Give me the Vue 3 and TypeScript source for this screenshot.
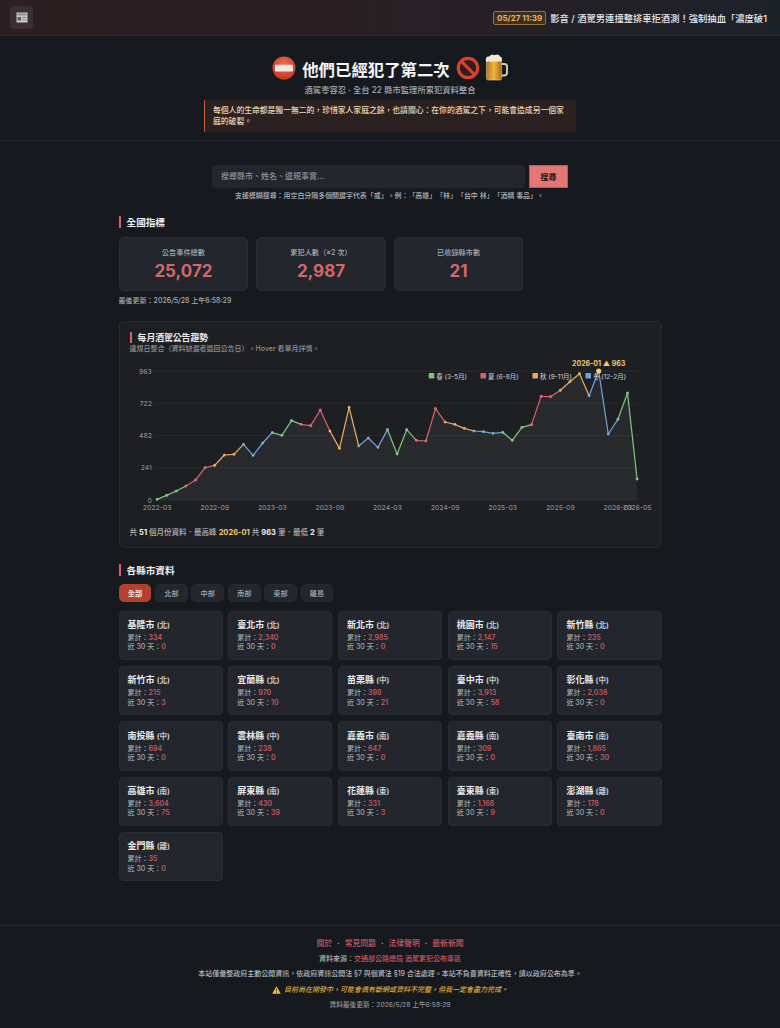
<script setup lang="ts">
interface County { name: string; region: string; total: string; recent: number }

const counties: County[] = [
  { name: '基隆市', region: '北', total: '334', recent: 0 },
  { name: '臺北市', region: '北', total: '2,340', recent: 0 },
  { name: '新北市', region: '北', total: '2,985', recent: 0 },
  { name: '桃園市', region: '北', total: '2,147', recent: 15 },
  { name: '新竹縣', region: '北', total: '235', recent: 0 },
  { name: '新竹市', region: '北', total: '215', recent: 3 },
  { name: '宜蘭縣', region: '北', total: '970', recent: 10 },
  { name: '苗栗縣', region: '中', total: '398', recent: 21 },
  { name: '臺中市', region: '中', total: '3,913', recent: 58 },
  { name: '彰化縣', region: '中', total: '2,036', recent: 0 },
  { name: '南投縣', region: '中', total: '694', recent: 0 },
  { name: '雲林縣', region: '中', total: '238', recent: 0 },
  { name: '嘉義市', region: '南', total: '647', recent: 0 },
  { name: '嘉義縣', region: '南', total: '309', recent: 0 },
  { name: '臺南市', region: '南', total: '1,865', recent: 30 },
  { name: '高雄市', region: '南', total: '3,604', recent: 75 },
  { name: '屏東縣', region: '南', total: '430', recent: 39 },
  { name: '花蓮縣', region: '東', total: '331', recent: 3 },
  { name: '臺東縣', region: '東', total: '1,168', recent: 9 },
  { name: '澎湖縣', region: '離', total: '178', recent: 0 },
  { name: '金門縣', region: '離', total: '35', recent: 0 },
]

const stats = [
  { label: '公告事件總數', value: '25,072' },
  { label: '累犯人數（≥2 次）', value: '2,987' },
  { label: '已收錄縣市數', value: '21' },
]

const filters = ['全部', '北部', '中部', '南部', '東部', '離島']

const zoomY = [538, 526, 513, 498, 480, 443, 436, 405, 403, 373, 406, 369, 338, 346, 302, 313, 317, 270, 333, 385, 262, 378, 354, 382, 329, 402, 329, 361, 363, 266, 306, 313, 325, 333, 335, 340, 337, 361, 322, 314, 229, 230, 211, 185, 161, 227, 153, 342, 298, 219, 477]

const left = 27.1
const step = 9.6
const top = 16
const base = 145
const px = (i: number) => left + step * i
const py = (i: number) => top + (zoomY[i] - 153) / 3

const seasonColors = { spring: '#7fc47a', summer: '#d9606a', autumn: '#e8ac5a', winter: '#6fa3d8' }
const season = (i: number): string => {
  const month = (i + 2) % 12
  if (month >= 2 && month <= 4) return seasonColors.spring
  if (month >= 5 && month <= 7) return seasonColors.summer
  if (month >= 8 && month <= 10) return seasonColors.autumn
  return seasonColors.winter
}

const points = zoomY.map((_, i) => ({ x: px(i), y: py(i), color: season(i) }))
const segments = points.slice(0, -1).map((p, i) => ({ x1: p.x, y1: p.y, x2: points[i + 1].x, y2: points[i + 1].y, color: p.color }))
const areaPath = `M${px(0)} ${base} ` + points.map((p) => `L${p.x} ${p.y}`).join(' ') + ` L${px(50)} ${base} Z`

const yTicks = [
  { label: '963', y: 16 },
  { label: '722', y: 48.3 },
  { label: '482', y: 80.5 },
  { label: '241', y: 112.7 },
  { label: '0', y: 145 },
]
const xTicks = [
  { label: '2022-03', i: 0 }, { label: '2022-09', i: 6 }, { label: '2023-03', i: 12 },
  { label: '2023-09', i: 18 }, { label: '2024-03', i: 24 }, { label: '2024-09', i: 30 },
  { label: '2025-03', i: 36 }, { label: '2025-09', i: 42 }, { label: '2026-03', i: 48 },
  { label: '2026-05', i: 50 },
]
const legend = [
  { label: '春 (3-5月)', x: 298.7, color: seasonColors.spring },
  { label: '夏 (6-8月)', x: 350.4, color: seasonColors.summer },
  { label: '秋 (9-11月)', x: 402.4, color: seasonColors.autumn },
  { label: '冬 (12-2月)', x: 455.4, color: seasonColors.winter },
]
</script>

<template>
  <div class="page">
    <header class="topbar">
      <div class="logo">
        <svg width="12" height="11" viewBox="0 0 12 11">
          <rect x="0.5" y="0.5" width="11" height="10" fill="#c9cbcc" />
          <rect x="1.5" y="1.5" width="9" height="2" fill="#8b8e90" />
          <rect x="1.5" y="5" width="3.5" height="3.5" fill="#55585b" />
          <rect x="6" y="5" width="4.5" height="1" fill="#85888a" />
          <rect x="6" y="7.3" width="4.5" height="1" fill="#85888a" />
        </svg>
      </div>
      <div class="ticker">
        <span class="ticker-time">05/27 11:39</span>
        <span class="ticker-text">影音 / 酒駕男連撞整排車拒酒測！強制抽血「濃度破1</span>
      </div>
    </header>

    <section class="hero">
      <h1 class="hero-title">
        <svg class="emoji" width="24" height="24" viewBox="0 0 24 24">
          <defs>
            <radialGradient id="redBall" cx="50%" cy="35%" r="70%">
              <stop offset="0%" stop-color="#f0705a" />
              <stop offset="100%" stop-color="#c2311f" />
            </radialGradient>
          </defs>
          <circle cx="12" cy="12" r="11.5" fill="url(#redBall)" />
          <rect x="3" y="8.8" width="18" height="6.6" rx="1" fill="#f3e6e2" />
        </svg>
        <span class="hero-text">他們已經犯了第二次</span>
        <svg class="emoji" width="24" height="24" viewBox="0 0 24 24">
          <circle cx="12" cy="12" r="9.7" fill="#2a2024" stroke="#d8402f" stroke-width="3.2" />
          <line x1="5.2" y1="5.2" x2="18.8" y2="18.8" stroke="#d8402f" stroke-width="3.2" />
        </svg>
        <svg class="emoji beer" width="23" height="27" viewBox="0 0 23 27">
          <defs>
            <linearGradient id="beerFill" x1="0" y1="0" x2="1" y2="0">
              <stop offset="0%" stop-color="#b8761f" />
              <stop offset="50%" stop-color="#f0b63f" />
              <stop offset="100%" stop-color="#a8691a" />
            </linearGradient>
          </defs>
          <path d="M16 10h3.5a2.5 2.5 0 0 1 2.500 2.500v6a3 3 0 0 1-3 3H16" fill="none" stroke="#cfc7b2" stroke-width="2" />
          <rect x="1.5" y="6" width="15" height="20" rx="1.6" fill="url(#beerFill)" stroke="#c9b58c" stroke-width="0.7" />
          <path d="M1 7c-1-3 1-5 3.500-4.500C5 .8 8 .2 9.500 1.200c2-1.200 5-.6 5.600 1.500 2 0 2.400 2.600 1.400 4.300-.8 1.400-2 .8-2.500 0-.8 1-2.400 1-3 .2-1 1-2.600 1-3.400.1C7 8 4.400 8 3.800 7 3 8.400 1.500 8.200 1 7z" fill="#f1e9d6" />
        </svg>
      </h1>
      <p class="hero-sub">酒駕零容忍 · 全台 22 縣市監理所累犯資料整合</p>
      <blockquote class="hero-quote">每個人的生命都是獨一無二的，珍惜家人家庭之餘，也請關心：在你的酒駕之下，可能會造成另一個家庭的破裂。</blockquote>
    </section>

    <main class="main">
      <div class="search-row">
        <div class="search-input">搜尋縣市、姓名、違規事實...</div>
        <button class="search-btn" type="button">搜尋</button>
      </div>
      <p class="search-help">支援模糊搜尋：用空白分隔多個關鍵字代表「或」。例：「高雄」「林」「台中 林」「酒精 毒品」。</p>

      <h2 class="section-title first">全國指標</h2>
      <div class="stats">
        <div v-for="s in stats" :key="s.label" class="stat">
          <div class="stat-label">{{ s.label }}</div>
          <div class="stat-value">{{ s.value }}</div>
        </div>
      </div>
      <p class="updated">最後更新：2026/5/28 上午6:58:29</p>

      <section class="chart-card">
        <h3 class="chart-title">每月酒駕公告趨勢</h3>
        <p class="chart-sub">違規日整合（資料缺漏者退回公告日）。Hover 看單月詳情。</p>
        <svg class="chart" width="522" height="162" viewBox="0 0 522 162">
          <line v-for="t in yTicks" :key="t.label" x1="23.400" x2="508.400" :y1="t.y" :y2="t.y" class="grid-line" />
          <path :d="areaPath" fill="#ffffff" fill-opacity="0.05" />
          <text v-for="t in yTicks" :key="'y' + t.label" x="21.900" :y="t.y + 2.5" text-anchor="end" class="axis">{{ t.label }}</text>
          <text v-for="t in xTicks" :key="t.label" :x="px(t.i)" y="154.500" text-anchor="middle" class="axis">{{ t.label }}</text>
          <line v-for="(s, i) in segments" :key="'s' + i" :x1="s.x1" :y1="s.y1" :x2="s.x2" :y2="s.y2" :stroke="s.color" stroke-width="1.25" />
          <circle v-for="(p, i) in points" :key="'p' + i" :cx="p.x" :cy="p.y" r="1.3" :fill="p.color" stroke="#e8e8e8" stroke-opacity="0.4" stroke-width="0.4" />
          <circle :cx="px(46)" :cy="py(46)" r="2.5" fill="#f5d36a" />
          <text :x="px(46)" y="10.500" text-anchor="middle" class="peak">2026-01 ▲ 963</text>
          <g v-for="l in legend" :key="l.label">
            <rect :x="l.x" y="18" width="5.6" height="5.6" rx="0.8" :fill="l.color" />
            <text :x="l.x + 7.600" y="23.500" class="legend">{{ l.label }}</text>
          </g>
        </svg>
        <p class="chart-summary">共 <b>51</b> 個月份資料．最高峰 <b class="gold">2026-01</b> 共 <b>963</b> 筆．最低 <b>2</b> 筆</p>
      </section>

      <h2 class="section-title second">各縣市資料</h2>
      <div class="filters">
        <button v-for="(f, i) in filters" :key="f" type="button" class="chip" :class="{ active: i === 0 }">{{ f }}</button>
      </div>
      <div class="county-grid">
        <article v-for="c in counties" :key="c.name" class="county">
          <div class="county-name">{{ c.name }} <span class="county-region">({{ c.region }})</span></div>
          <div class="county-line">累計：<b>{{ c.total }}</b></div>
          <div class="county-line">近 30 天：<b>{{ c.recent }}</b></div>
        </article>
      </div>
    </main>

    <footer class="footer">
      <nav class="footer-links">
        <a>關於</a><span class="dot">·</span><a>常見問題</a><span class="dot">·</span><a>法律聲明</a><span class="dot">·</span><a>最新新聞</a>
      </nav>
      <p class="footer-source">資料來源：<a>交通部公路總局 酒駕累犯公布專區</a></p>
      <p class="footer-note">本站僅彙整政府主動公開資訊，依政府資訊公開法 §7 與個資法 §19 合法處理。本站不負責資料正確性，請以政府公布為準。</p>
      <p class="footer-warn">
        <svg width="9" height="8" viewBox="0 0 9 8"><path d="M4.500 0.300 8.800 7.700H.2z" fill="#f2c230" /><rect x="4.100" y="2.700" width="0.800" height="2.800" fill="#3a2c05" /><rect x="4.100" y="6" width="0.800" height="0.800" fill="#3a2c05" /></svg>
        <em>目前尚在開發中，可能會偶有斷網或資料不完整，但我一定會盡力完成。</em>
      </p>
      <p class="footer-time">資料最後更新：2026/5/28 上午6:58:29</p>
    </footer>
  </div>
</template>

<style>
html, body { margin: 0; background: #161a1f; }
</style>

<style scoped>
.page {
  width: 780px;
  min-height: 1028px;
  background: #161a1f;
  color: #e6e8ea;
  font-family: "Inter", "Noto Sans CJK TC", "Liberation Sans", sans-serif;
  font-weight: 500;
  text-spacing-trim: space-all;
  overflow: hidden;
}
p, h1, h2, h3, blockquote { margin: 0; }

.topbar {
  height: 35px;
  display: flex;
  align-items: center;
  justify-content: space-between;
  padding: 0 0 0 10px;
  background: linear-gradient(90deg, #2a1f21 0%, #2a2024 45%, #1d222a 100%);
  border-bottom: 1px solid #262a30;
}
.logo {
  width: 23px;
  height: 23px;
  border-radius: 4px;
  background: #3a3034;
  display: flex;
  align-items: center;
  justify-content: center;
}
.ticker { display: flex; align-items: center; gap: 4px; padding-right: 13px; white-space: nowrap; }
.ticker-time {
  font-size: 8px;
  font-weight: 700;
  line-height: 10px;
  color: #e6b566;
  background: #3c2f22;
  border: 1px solid #9a7434;
  border-radius: 2px;
  padding: 1px 3px;
}
.ticker-text { font-size: 9.300px; font-weight: 500; color: #e6eaee; }

.hero {
  height: 105px;
  box-sizing: border-box;
  padding-top: 18px;
  display: flex;
  flex-direction: column;
  align-items: center;
  border-bottom: 1px solid #22262c;
}
.hero-title {
  display: flex;
  align-items: center;
  height: 27px;
  gap: 6.500px;
  font-size: 16.400px;
  font-weight: 700;
  color: #f4f5f6;
}
.hero-text { margin-top: 3px; }
.beer { margin-left: -1.500px; }
.hero-sub { margin-top: 3px; font-size: 8.300px; line-height: 12px; color: #a2a7ac; }
.hero-quote {
  box-sizing: border-box;
  width: 372px;
  margin-top: 4px;
  padding: 4.500px 8px;
  font-size: 7.800px;
  line-height: 11.700px;
  font-weight: 500;
  color: #e8d6b4;
  background: #2a2120;
  border-left: 1.500px solid #c8643f;
  border-radius: 1px;
}

.main { width: 543px; margin-left: 118.600px; }
.search-row { display: flex; gap: 4px; margin-top: 24px; margin-left: 93.400px; }
.search-input {
  box-sizing: border-box;
  width: 313px;
  height: 22.500px;
  line-height: 22.500px;
  padding-left: 9px;
  font-size: 8px;
  color: #8b9096;
  background: #23272d;
  border-radius: 4px;
}
.search-btn {
  box-sizing: border-box;
  width: 39px;
  height: 23px;
  padding: 0;
  font-family: inherit;
  font-size: 8px;
  font-weight: 700;
  color: #2a1a1a;
  background: #e57676;
  border: 1px solid #b9585c;
  border-radius: 0;
}
.search-help {
  margin-top: 2.500px;
  margin-left: 116.400px;
  font-size: 6.950px;
  line-height: 10px;
  color: #b0b4b8;
  white-space: nowrap;
}

.section-title {
  display: flex;
  align-items: center;
  height: 12px;
  padding-left: 6px;
  border-left: 2.400px solid #d9606a;
  font-size: 9.600px;
  font-weight: 700;
  color: #eef0f1;
}
.section-title.first { margin-top: 15.500px; }
.section-title.second { margin-top: 16px; }

.stats { display: flex; gap: 7.900px; margin-top: 8.500px; }
.stat {
  box-sizing: border-box;
  width: 129.700px;
  height: 54px;
  padding-top: 10px;
  background: #23272d;
  border: 1px solid #2a2e34;
  border-radius: 5px;
  text-align: center;
}
.stat-label { font-size: 7.200px; line-height: 10px; color: #a5aaae; }
.stat-value { margin-top: 2px; font-size: 17px; line-height: 22px; font-weight: 700; color: #d2666b; }
.updated { margin-top: 5.500px; font-size: 7px; line-height: 10px; color: #a9adb1; }

.chart-card {
  box-sizing: border-box;
  width: 543px;
  height: 227px;
  margin-top: 15px;
  padding: 10px 10px 0;
  background: #1d1f23;
  border: 1px solid #262a30;
  border-radius: 5px;
}
.chart-title {
  height: 11px;
  line-height: 11px;
  padding-left: 6px;
  border-left: 2.400px solid #d9606a;
  font-size: 8.800px;
  font-weight: 700;
  color: #e8eaec;
}
.chart-sub { margin-top: 1px; font-size: 7px; line-height: 10px; color: #8d9196; }
.chart { display: block; margin-top: 1px; }
.grid-line { stroke: #2b2e33; stroke-width: 0.7; }
.axis { font-size: 6.800px; fill: #85898e; }
.peak { font-size: 7px; font-weight: 700; fill: #efc96a; }
.legend { font-size: 6.500px; fill: #b9bcc0; }
.chart-summary { margin-top: 10px; font-size: 7.500px; line-height: 12px; color: #b0b4b8; }
.chart-summary b { font-weight: 700; color: #f0f1f2; }
.chart-summary b.gold { color: #efc96a; }

.filters { display: flex; gap: 3.600px; margin-top: 8px; }
.chip {
  box-sizing: border-box;
  width: 32.800px;
  height: 18px;
  padding: 0;
  font-family: inherit;
  font-size: 7.200px;
  font-weight: 500;
  color: #a5a9ad;
  background: #23272d;
  border: 1px solid #272b31;
  border-radius: 5px;
}
.chip.active { color: #f4e9e4; font-weight: 700; background: #b5402f; border-color: #b5402f; }

.county-grid {
  display: grid;
  grid-template-columns: repeat(5, 1fr);
  gap: 6px 5.600px;
  margin-top: 8.700px;
}
.county {
  box-sizing: border-box;
  height: 49.300px;
  padding: 7.500px 8px 0;
  background: #23272d;
  border: 1px solid #292d33;
  border-radius: 4px;
}
.county-name { font-size: 9px; line-height: 12px; font-weight: 700; color: #e9ebec; margin-bottom: 1px; white-space: nowrap; }
.county-region { font-size: 7.500px; color: #c5c8cb; }
.county-line { font-size: 7px; line-height: 9.300px; color: #a0a4a8; white-space: nowrap; }
.county-line b { font-weight: 600; color: #c4585f; }

.footer {
  margin-top: 44px;
  padding-top: 12px;
  height: 103px;
  box-sizing: border-box;
  border-top: 1px solid #262a30;
  text-align: center;
  font-size: 7px;
  color: #a9adb1;
}
.footer a { color: #c4585f; }
.footer-links { font-size: 7.800px; line-height: 11px; }
.dot { margin: 0 5px; color: #b7babd; font-weight: 700; }
.footer-source { margin-top: 5px; line-height: 10px; }
.footer-note { margin-top: 5px; line-height: 10px; color: #b3b6ba; }
.footer-warn { margin-top: 6px; line-height: 10px; display: flex; align-items: center; justify-content: center; gap: 3px; color: #d9a93f; }
.footer-warn em { font-style: italic; }
.footer-time { margin-top: 5px; font-size: 6.700px; line-height: 10px; color: #8f9397; }
</style>
